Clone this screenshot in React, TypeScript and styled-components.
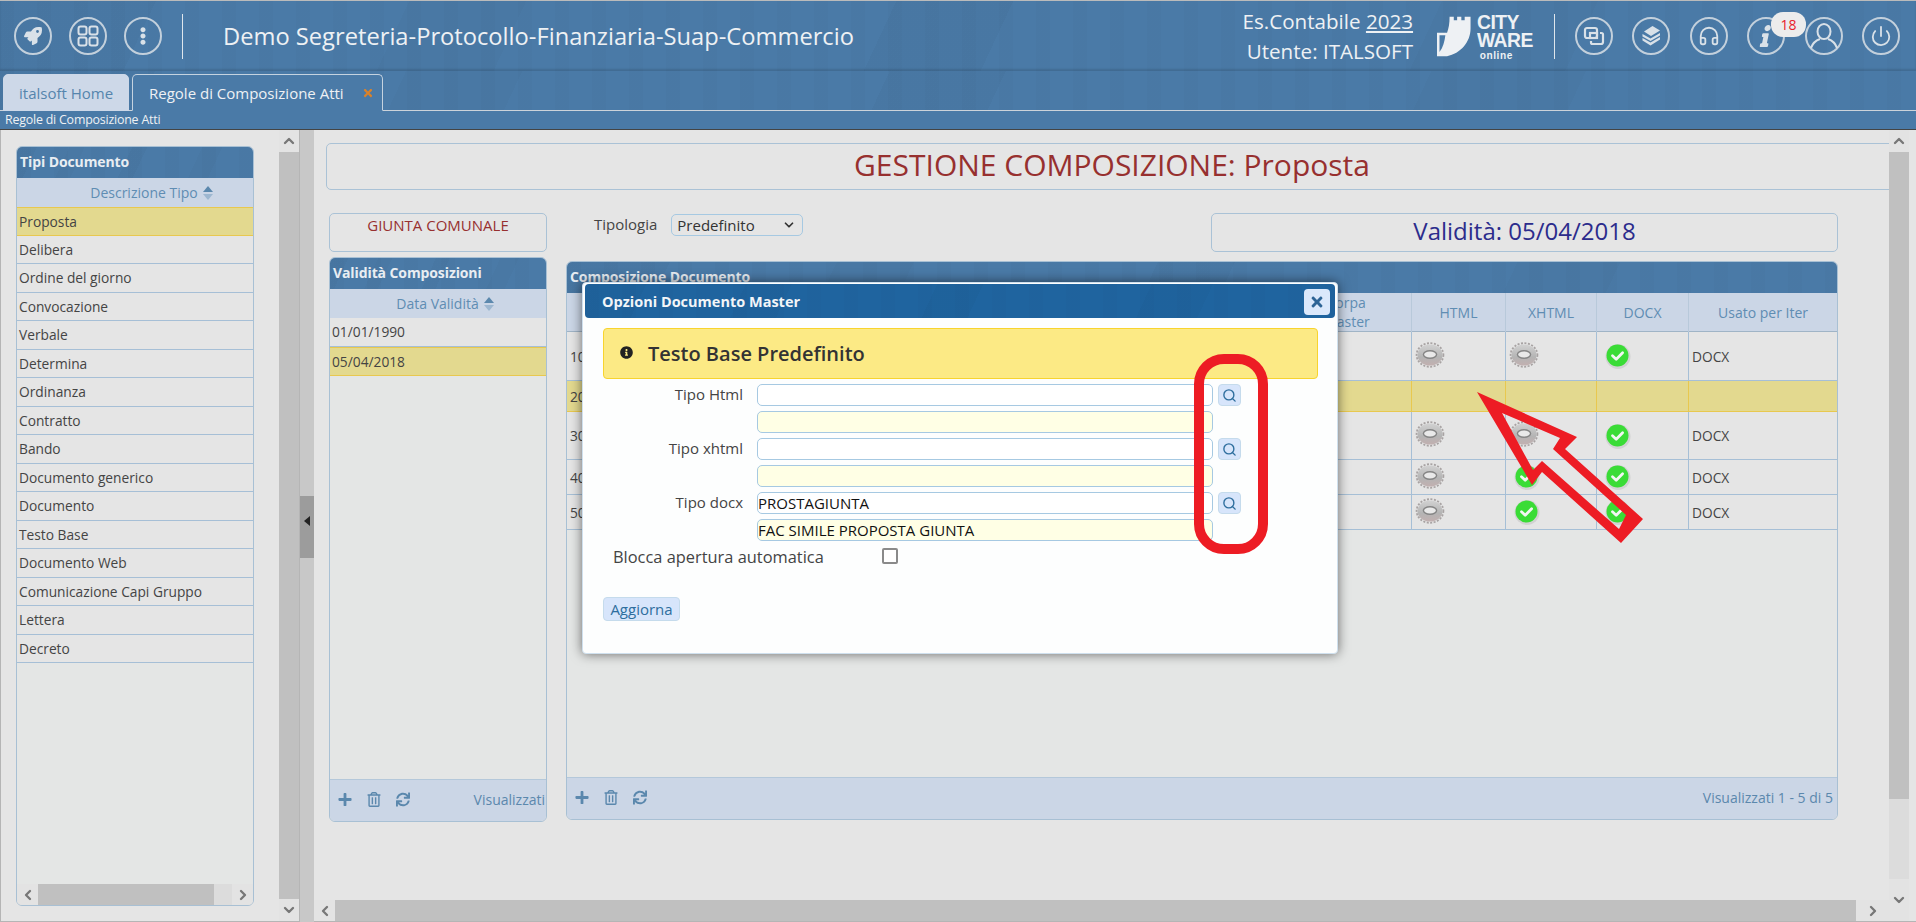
import React from 'react';
import styled, { createGlobalStyle, css } from 'styled-components';
import {
  FaRocket,
  FaEllipsisV,
  FaInfo,
  FaInfoCircle,
  FaPlus,
  FaRegTrashAlt,
  FaSync,
  FaTimes,
} from 'react-icons/fa';
import { LuHeadphones, LuPower, LuSearch, LuChevronUp, LuChevronDown, LuChevronLeft, LuChevronRight } from 'react-icons/lu';

const GlobalStyle = createGlobalStyle`
  html, body {
    margin: 0;
    padding: 0;
    height: 100%;
    overflow: hidden;
    background: #e5e5e5;
  }
  * { box-sizing: border-box; }
  body {
    font-family: "Open Sans", "Liberation Sans", sans-serif;
    font-size: 14px;
    color: #444;
  }
`;

const texture = css`
  background-image:
    linear-gradient(115deg, rgba(0, 0, 0, 0.025) 0 8%, transparent 8% 21%, rgba(0, 0, 0, 0.02) 21% 27%, transparent 27% 46%, rgba(0, 0, 0, 0.025) 46% 52%, transparent 52% 74%, rgba(0, 0, 0, 0.02) 74% 82%, transparent 82%),
    repeating-linear-gradient(90deg, rgba(0, 0, 0, 0.015) 0 14px, transparent 14px 37px);
`;

const Page = styled.div`
  position: relative;
  width: 1916px;
  height: 922px;
  display: flex;
  flex-direction: column;
  overflow: hidden;
  border-top: 1px solid #bbb;
`;

const Header = styled.header`
  height: 70px;
  flex-shrink: 0;
  display: flex;
  align-items: center;
  padding: 0 16px 0 14px;
  background-color: #4a7aa7;
  ${texture}
  box-shadow: inset 0 -2px 2px rgba(0, 0, 0, 0.12);
  color: #eef1f4;
`;

const CircleBtn = styled.div`
  width: 38px;
  height: 38px;
  flex-shrink: 0;
  border-radius: 50%;
  border: 2px solid #c3d0dc;
  display: flex;
  align-items: center;
  justify-content: center;
  color: #d9e1e8;
  font-size: 18px;
`;

const IconGroup = styled.div<{ $gap: number }>`
  display: flex;
  align-items: center;
  gap: ${(p) => p.$gap}px;
`;

const Divider = styled.div<{ $ml: number }>`
  width: 1px;
  height: 45px;
  background: #dfe6ec;
  margin-left: ${(p) => p.$ml}px;
`;

const AppTitle = styled.div`
  margin-left: 40px;
  font-size: 23.7px;
  white-space: nowrap;
  flex: 1;
`;

const UserInfo = styled.div`
  text-align: right;
  font-size: 20.6px;
  line-height: 30px;
  white-space: nowrap;
  u { text-underline-offset: 2px; }
`;

const Logo = styled.div`
  display: flex;
  align-items: center;
  margin-left: 24px;
  width: 101px;
  gap: 6px;
  color: #eef1f4;
`;

const LogoText = styled.div`
  font-family: "Liberation Sans", sans-serif;
  font-weight: 700;
  font-size: 21px;
  line-height: 18px;
  letter-spacing: -0.6px;
  margin-top: 3px;
  transform: scaleX(0.92);
  transform-origin: left center;
  span {
    display: block;
    font-size: 11px;
    line-height: 13px;
    letter-spacing: 0.6px;
    margin-left: 3px;
  }
`;

const RightIcons = styled(IconGroup)`
  margin-left: 20px;
`;

const Badge = styled.div`
  position: absolute;
  top: 11px;
  left: 1771px;
  width: 35px;
  height: 25px;
  border-radius: 12px;
  background: #ececec;
  color: #e8202a;
  font-size: 14px;
  display: flex;
  align-items: center;
  justify-content: center;
`;

const ItalicInfo = styled(FaInfo)`
  font-size: 22px;
  transform: skewX(-12deg);
`;

const TabStrip = styled.nav`
  height: 40px;
  flex-shrink: 0;
  display: flex;
  align-items: flex-end;
  gap: 3px;
  padding-left: 3px;
  background-color: #4a7aa7;
  ${texture}
  border-bottom: 1px solid #ccd3da;
`;

const Tab = styled.div<{ $active?: boolean }>`
  height: 37px;
  margin-bottom: -1px;
  display: flex;
  align-items: center;
  border-radius: 5px 5px 0 0;
  font-size: 15px;
  white-space: nowrap;
  border: 1px solid ${(p) => (p.$active ? '#c5d3e0' : '#cdd8e8')};
  border-bottom: ${(p) => (p.$active ? '1px solid #4a7aa7' : '1px solid #cdd8e8')};
  background: ${(p) => (p.$active ? '#4a7aa7' : '#cdd8e8')};
  color: ${(p) => (p.$active ? '#eef1f4' : '#5585ad')};
  padding: 0 ${(p) => (p.$active ? '8px 0 16px' : '15px 0 15px')};
  width: ${(p) => (p.$active ? '251px' : '126px')};
  justify-content: space-between;
  svg { color: #d9822b; font-size: 12px; }
`;

const SubBar = styled.div`
  height: 19px;
  flex-shrink: 0;
  background: #4a7aa7;
  border-bottom: 1px solid #444;
  color: #eef1f4;
  font-size: 12.4px;
  line-height: 18px;
  padding-left: 5px;
  letter-spacing: -0.2px;
`;

const Workspace = styled.div`
  flex: 1;
  min-height: 0;
  display: flex;
`;

const LeftPane = styled.aside`
  width: 300px;
  flex-shrink: 0;
  display: flex;
  border: 1px solid #b5b5b5;
  border-top: none;
`;

const LeftContent = styled.div`
  flex: 1;
  min-width: 0;
  padding: 16px 25px 14px 15px;
  display: flex;
`;

const VScroll = styled.div`
  width: 20px;
  flex-shrink: 0;
  display: flex;
  flex-direction: column;
  background: #dcdcdc;
`;

const HScroll = styled.div`
  height: 21px;
  flex-shrink: 0;
  display: flex;
  background: #dcdcdc;
`;

const ScrollBtn = styled.div<{ $horizontal?: boolean; $size?: number }>`
  ${(p) => (p.$horizontal ? `width: ${p.$size ?? 21}px;` : `height: ${p.$size ?? 22}px;`)}
  flex-shrink: 0;
  display: flex;
  align-items: center;
  justify-content: center;
  background: #e3e3e3;
  color: #777;
  font-size: 16px;
`;

const ScrollThumb = styled.div<{ $size?: number }>`
  background: #c0c0c0;
  ${(p) => (p.$size ? `flex: 0 0 ${p.$size}px;` : 'flex: 1;')}
`;

const ScrollSpace = styled.div`
  flex: 1;
`;

const Splitter = styled.div`
  width: 14px;
  flex-shrink: 0;
  background: #c8c8c8;
  display: flex;
  align-items: center;
`;

const SplitHandle = styled.div`
  width: 100%;
  height: 62px;
  margin-top: 2px;
  background: #9c9c9c;
  display: flex;
  align-items: center;
  justify-content: center;
  &::before {
    content: '';
    border-style: solid;
    border-width: 5px 6px 5px 0;
    border-color: transparent #222 transparent transparent;
    margin-bottom: 12px;
  }
`;

const MainPane = styled.main`
  flex: 1;
  min-width: 0;
  display: flex;
  border-radius: 6px 0 0 0;
  padding-right: 7px;
  border-bottom: 1px solid #b5b5b5;
`;

const MainColumn = styled.div`
  flex: 1;
  min-width: 0;
  display: flex;
  flex-direction: column;
`;

const Canvas = styled.div`
  flex: 1;
  min-height: 0;
  overflow: hidden;
  padding: 13px 0 0 12px;
`;

const TitleBox = styled.div`
  width: 1572px;
  height: 47px;
  border: 1px solid #aac2d6;
  border-radius: 5px;
  color: #97302f;
  font-size: 30px;
  text-align: center;
  line-height: 42px;
`;

const Columns = styled.div`
  display: flex;
  margin: 23px 0 0 3px;
  gap: 19px;
`;

const SideColumn = styled.div`
  width: 218px;
  flex-shrink: 0;
  display: flex;
  flex-direction: column;
  gap: 5px;
`;

const WideColumn = styled.div`
  width: 1272px;
  flex-shrink: 0;
  display: flex;
  flex-direction: column;
  gap: 9px;
`;

const OrganoBox = styled.div`
  height: 39px;
  border: 1px solid #aac2d6;
  border-radius: 5px;
  color: #97302f;
  font-size: 15px;
  line-height: 20px;
  text-align: center;
  padding-top: 1px;
`;

const FilterRow = styled.div`
  height: 39px;
  display: flex;
  align-items: flex-start;
  padding-left: 28px;
`;

const FieldLabel = styled.label`
  font-size: 15px;
  line-height: 22px;
  margin-right: 14px;
`;

const SelectBox = styled.div`
  width: 132px;
  height: 22px;
  margin-top: 1px;
  border: 1px solid #a6c9e2;
  border-radius: 5px;
  display: flex;
  align-items: center;
  justify-content: space-between;
  padding: 0 6px 0 5px;
  color: #333;
  font-size: 15px;
  svg { font-size: 14px; stroke-width: 3; }
`;

const ValidityBox = styled.div`
  width: 627px;
  height: 39px;
  margin-left: auto;
  border: 1px solid #aac2d6;
  border-radius: 5px;
  color: #2c2c8c;
  font-size: 24px;
  text-align: center;
  line-height: 34px;
`;

const GridPanel = styled.section<{ $height: number }>`
  height: ${(p) => p.$height}px;
  display: flex;
  flex-direction: column;
  border: 1px solid #a8c0d4;
  border-radius: 6px;
  overflow: hidden;
  background: #e5e5e5;
`;

const StretchPanel = styled(GridPanel)`
  flex: 1;
  min-width: 0;
`;

const GridCaption = styled.div`
  height: 31px;
  flex-shrink: 0;
  background-color: #4a7aa7;
  ${texture}
  color: #e8edf2;
  font-weight: 700;
  padding-left: 3px;
  line-height: 30px;
  white-space: nowrap;
  letter-spacing: -0.1px;
`;

const ColHeader = styled.div<{ $shift: number }>`
  height: 29px;
  flex-shrink: 0;
  display: flex;
  align-items: center;
  justify-content: center;
  gap: 5px;
  padding-left: ${(p) => p.$shift}px;
  background: #cbd6e6;
  color: #5f8db3;
`;

const Sort = styled.span`
  display: inline-flex;
  flex-direction: column;
  gap: 2px;
  &::before, &::after {
    content: '';
    border-left: 5px solid transparent;
    border-right: 5px solid transparent;
  }
  &::before { border-bottom: 6px solid #5b88ad; }
  &::after { border-top: 6px solid #9db7d0; }
`;

const GridBody = styled.div`
  flex: 1;
  min-height: 0;
  background: #e4e6e5;
`;

const ListRow = styled.div<{ $selected?: boolean; $height: number }>`
  height: ${(p) => p.$height}px;
  padding-left: 2px;
  display: flex;
  align-items: center;
  white-space: nowrap;
  font-size: 13.75px;
  background: ${(p) => (p.$selected ? '#e3d98f' : '#e5e5e5')};
  border-bottom: 1px solid ${(p) => (p.$selected ? '#e8c84f' : '#a6bfd6')};
  border-top: ${(p) => (p.$selected ? '1px solid #e8c84f' : 'none')};
`;

const GridFooter = styled.div`
  height: 42px;
  flex-shrink: 0;
  display: flex;
  align-items: center;
  gap: 15px;
  padding: 0 4px 2px 8px;
  background: #cbd6e6;
  border-top: 1px solid #b4c8da;
  color: #5b88ad;
  font-size: 14px;
`;

const FooterIcon = styled.span`
  width: 14px;
  display: inline-flex;
  justify-content: center;
  svg { font-size: 15px; }
`;

const PagerInfo = styled.span<{ $clipped?: boolean }>`
  margin-left: auto;
  margin-right: ${(p) => (p.$clipped ? '-3px' : '0')};
  white-space: nowrap;
`;

const docColumns = '701px 144px 94px 91px 92px 1fr';

const DocHeader = styled.div`
  height: 39px;
  flex-shrink: 0;
  display: grid;
  grid-template-columns: ${docColumns};
  background: #cbd6e6;
  color: #5f8db3;
  border-bottom: 1px solid #a0b4c6;
`;

const DocHeadCell = styled.div`
  display: flex;
  align-items: center;
  justify-content: center;
  text-align: center;
  line-height: 19px;
  padding-bottom: 1px;
  border-right: 1px solid #b8c9da;
  &:last-child { border-right: none; }
`;

const DocRow = styled.div<{ $height: number; $selected?: boolean }>`
  height: ${(p) => p.$height}px;
  display: grid;
  grid-template-columns: ${docColumns};
  background: ${(p) => (p.$selected ? '#e3d98f' : '#e5e5e5')};
  border-bottom: 1px solid ${(p) => (p.$selected ? '#e8c84f' : '#a6bfd6')};
`;

const DocCell = styled.div<{ $selected?: boolean }>`
  display: flex;
  align-items: center;
  padding-left: 3px;
  font-size: 13.75px;
  border-right: 1px solid ${(p) => (p.$selected ? '#e8c84f' : '#a6bfd6')};
  &:first-child { border-right: none; }
  &:last-child { border-right: none; }
`;

const Dialog = styled.div`
  position: absolute;
  left: 582px;
  top: 281px;
  width: 756px;
  height: 372px;
  padding: 1px 2px;
  background: #fdfefe;
  border-radius: 4px;
  border: 1px solid #cfe0ee;
  box-shadow: 0 0 12px rgba(0, 0, 0, 0.55);
  z-index: 5;
`;

const DialogBar = styled.div`
  height: 34px;
  display: flex;
  align-items: center;
  justify-content: space-between;
  padding: 1px 5px 0 17px;
  border-radius: 4px;
  background-color: #1f649f;
  ${texture}
  color: #f2f5f8;
  font-weight: 700;
  font-size: 14.5px;
`;

const CloseBtn = styled.div`
  width: 26px;
  height: 26px;
  border-radius: 4px;
  background: #dbe8fb;
  color: #2e6496;
  display: flex;
  align-items: center;
  justify-content: center;
  font-size: 16px;
`;

const DialogBody = styled.div`
  padding: 10px 17px 0 18px;
`;

const Notice = styled.div`
  height: 51px;
  display: flex;
  align-items: center;
  gap: 15px;
  padding-left: 16px;
  margin-bottom: 5px;
  background: #fcea85;
  border: 1px solid #f8d42e;
  border-radius: 4px;
  color: #333;
  font-size: 20px;
  font-weight: 600;
  svg { font-size: 13px; color: #222; margin-bottom: 3px; }
`;

const FormRow = styled.div`
  display: grid;
  grid-template-columns: 140px 470px 23px;
  height: 22px;
  margin-bottom: 5px;
`;

const FormLabel = styled.label`
  text-align: right;
  font-size: 15px;
  line-height: 20px;
`;

const InputSlot = styled.div`
  grid-column: 2;
  margin-left: 14px;
  width: 456px;
`;

const TextInput = styled.input<{ $readOnlyLook?: boolean }>`
  display: block;
  width: 100%;
  height: 22px;
  padding: 0;
  font: inherit;
  font-size: 15px;
  color: #111;
  border: 1px solid #a6c9e2;
  border-radius: 5px;
  background: ${(p) => (p.$readOnlyLook ? '#ffffe5' : '#ffffff')};
  outline: none;
`;

const SearchBtn = styled.div`
  grid-column: 3;
  margin-left: 5px;
  width: 23px;
  height: 22px;
  display: flex;
  align-items: center;
  justify-content: center;
  border: 1px solid #c5dbec;
  border-radius: 4px;
  background: #d7e5fb;
  color: #2e6e9e;
  font-size: 15px;
  svg { stroke-width: 2.2; }
`;

const CheckRow = styled.div`
  display: flex;
  align-items: center;
  height: 22px;
  margin-top: -1px;
  padding-left: 10px;
`;

const CheckLabel = styled.span`
  width: 269px;
  font-size: 16.4px;
  white-space: nowrap;
`;

const CheckBox = styled.span`
  width: 16px;
  height: 16px;
  border: 2px solid #8a8a8a;
  border-radius: 2px;
  background: #fff;
`;

const UpdateBtn = styled.button`
  display: block;
  margin-top: 30px;
  width: 77px;
  height: 24px;
  padding: 0;
  font: inherit;
  font-size: 15px;
  line-height: 20px;
  color: #2e6e9e;
  background: #d7e5fb;
  border: 1px solid #c5dbec;
  border-radius: 4px;
`;

const RedRing = styled.div`
  position: absolute;
  left: 1194px;
  top: 353px;
  width: 74px;
  height: 200px;
  border: 10px solid #ed1c24;
  border-radius: 30px;
  z-index: 6;
`;

const RedArrow = styled.svg`
  position: absolute;
  left: 1470px;
  top: 384px;
  z-index: 6;
`;

const GearIcon: React.FC = () => (
  <svg width="30" height="28" viewBox="0 0 30 28" style={{ marginTop: -3 }}>
    <defs>
      <linearGradient id="gearFill" x1="0" y1="0" x2="0" y2="1">
        <stop offset="0" stopColor="#d2d2d2" />
        <stop offset="0.6" stopColor="#b4b4b4" />
        <stop offset="1" stopColor="#c2b0b0" />
      </linearGradient>
    </defs>
    <ellipse cx="15" cy="14" rx="13.4" ry="11.8" fill="none" stroke="#a8a3a3" strokeWidth="1.8" strokeDasharray="2 1.5" />
    <ellipse cx="15" cy="14" rx="12.6" ry="10.6" fill="url(#gearFill)" />
    <ellipse cx="15" cy="13.5" rx="6.6" ry="3.8" fill="#e9e9e9" stroke="#858585" strokeWidth="1.4" />
  </svg>
);

const CheckIcon: React.FC = () => (
  <svg width="26" height="26" viewBox="0 0 26 26" style={{ marginLeft: 5 }}>
    <circle cx="13" cy="13.5" r="12.5" fill="#d2d2d2" />
    <circle cx="12.5" cy="12.5" r="11" fill="#3adc36" />
    <path d="M7.5 12.8 L11.2 16.2 L17.6 9.8" fill="none" stroke="#f2f6f2" strokeWidth="2.8" strokeLinecap="round" strokeLinejoin="round" />
  </svg>
);

const GridGlyph: React.FC = () => (
  <svg width="24" height="24" viewBox="0 0 24 24" fill="none" stroke="currentColor" strokeWidth="2">
    <rect x="2.5" y="2.5" width="8" height="8" rx="2" />
    <rect x="13.5" y="2.5" width="8" height="8" rx="2" />
    <rect x="2.5" y="13.5" width="8" height="8" rx="2" />
    <rect x="13.5" y="13.5" width="8" height="8" rx="2" />
  </svg>
);

const WindowsGlyph: React.FC = () => (
  <svg width="22" height="20" viewBox="0 0 22 20" fill="none" stroke="currentColor" strokeWidth="2.2">
    <rect x="2" y="2" width="12" height="10" rx="2" />
    <path d="M17 7h1.5a1.5 1.5 0 0 1 1.5 1.5V16a2 2 0 0 1-2 2H9.5A1.5 1.5 0 0 1 8 16.5V15" />
    <rect x="7" y="7" width="7" height="5" />
  </svg>
);

const BooksGlyph: React.FC = () => (
  <svg width="24" height="24" viewBox="0 0 24 24" fill="currentColor">
    <path d="M5 7.5 L13.5 2 L21 6.5 L12 12 Z" />
    <path d="M3.5 10 L11.5 14.5 L21 9 V11.5 L11.5 17 L3.5 12.5 Z" />
    <path d="M3.5 14 L11.5 18.5 L21 13 V15.5 L11.5 21.5 L3.5 16.5 Z" />
  </svg>
);

const UserGlyph: React.FC = () => (
  <svg width="34" height="34" viewBox="0 0 34 34" fill="none" stroke="currentColor" strokeWidth="2">
    <ellipse cx="17" cy="12.5" rx="6.5" ry="7.5" />
    <path d="M4 29c2-6 6-8 9-9M30 29c-2-6-6-8-9-9" />
  </svg>
);

const CityLogo: React.FC = () => (
  <svg width="41" height="47" viewBox="0 0 41 47" fill="currentColor">
    <path d="M15 0h5v4h4V0h5v4h4V0h7v14c0 16-12 30-28 33H0V19h12c2-5 3-11 3-19Z" />
    <path d="M3 22h7c-1 8-3 15-7 20Z" fill="#4a7aa7" />
  </svg>
);

const tipiDocumento = [
  'Proposta',
  'Delibera',
  'Ordine del giorno',
  'Convocazione',
  'Verbale',
  'Determina',
  'Ordinanza',
  'Contratto',
  'Bando',
  'Documento generico',
  'Documento',
  'Testo Base',
  'Documento Web',
  'Comunicazione Capi Gruppo',
  'Lettera',
  'Decreto',
];

type DocLine = { seq: string; height: number; html?: string; xhtml?: string; docx?: string; iter?: string; selected?: boolean };

const docLines: DocLine[] = [
  { seq: '10', height: 49, html: 'gear', xhtml: 'gear', docx: 'check', iter: 'DOCX' },
  { seq: '20', height: 31, selected: true },
  { seq: '30', height: 48, html: 'gear', xhtml: 'gear', docx: 'check', iter: 'DOCX' },
  { seq: '40', height: 35, html: 'gear', xhtml: 'check', docx: 'check', iter: 'DOCX' },
  { seq: '50', height: 35, html: 'gear', xhtml: 'check', docx: 'check', iter: 'DOCX' },
];

const StateIcon: React.FC<{ kind?: string }> = ({ kind }) => {
  if (kind === 'gear') return <GearIcon />;
  if (kind === 'check') return <CheckIcon />;
  return null;
};

const FooterTools: React.FC = () => (
  <>
    <FooterIcon><FaPlus /></FooterIcon>
    <FooterIcon><FaRegTrashAlt /></FooterIcon>
    <FooterIcon><FaSync /></FooterIcon>
  </>
);

const DocField: React.FC<{ label: string; code?: string; description?: string }> = ({ label, code = '', description = '' }) => (
  <>
    <FormRow>
      <FormLabel>{label}</FormLabel>
      <InputSlot><TextInput readOnly value={code} /></InputSlot>
      <SearchBtn><LuSearch /></SearchBtn>
    </FormRow>
    <FormRow>
      <InputSlot><TextInput $readOnlyLook readOnly value={description} /></InputSlot>
    </FormRow>
  </>
);

const App: React.FC = () => (
  <>
    <GlobalStyle />
    <Page>
      <Header>
        <IconGroup $gap={17}>
          <CircleBtn><FaRocket /></CircleBtn>
          <CircleBtn><GridGlyph /></CircleBtn>
          <CircleBtn><FaEllipsisV /></CircleBtn>
        </IconGroup>
        <Divider $ml={20} />
        <AppTitle>Demo Segreteria-Protocollo-Finanziaria-Suap-Commercio</AppTitle>
        <UserInfo>
          <div>Es.Contabile <u>2023</u></div>
          <div>Utente: ITALSOFT</div>
        </UserInfo>
        <Logo>
          <CityLogo />
          <LogoText>
            CITY
            <br />
            WARE
            <span>online</span>
          </LogoText>
        </Logo>
        <Divider $ml={16} />
        <RightIcons $gap={19.4}>
          <CircleBtn><WindowsGlyph /></CircleBtn>
          <CircleBtn><BooksGlyph /></CircleBtn>
          <CircleBtn><LuHeadphones size={22} /></CircleBtn>
          <CircleBtn><ItalicInfo /></CircleBtn>
          <CircleBtn><UserGlyph /></CircleBtn>
          <CircleBtn><LuPower size={22} /></CircleBtn>
        </RightIcons>
      </Header>
      <Badge>18</Badge>
      <TabStrip>
        <Tab>italsoft Home</Tab>
        <Tab $active>
          Regole di Composizione Atti
          <FaTimes />
        </Tab>
      </TabStrip>
      <SubBar>Regole di Composizione Atti</SubBar>
      <Workspace>
        <LeftPane>
          <LeftContent>
            <StretchPanel $height={760}>
              <GridCaption>Tipi Documento</GridCaption>
              <ColHeader $shift={33}>
                Descrizione Tipo
                <Sort />
              </ColHeader>
              <GridBody>
                {tipiDocumento.map((name, i) => (
                  <ListRow key={name} $height={28.5} $selected={i === 0}>{name}</ListRow>
                ))}
              </GridBody>
              <HScroll>
                <ScrollBtn $horizontal><LuChevronLeft strokeWidth={3.5} /></ScrollBtn>
                <ScrollThumb $size={176} />
                <ScrollSpace />
                <ScrollBtn $horizontal><LuChevronRight strokeWidth={3.5} /></ScrollBtn>
              </HScroll>
            </StretchPanel>
          </LeftContent>
          <VScroll>
            <ScrollBtn><LuChevronUp strokeWidth={3.5} /></ScrollBtn>
            <ScrollThumb />
            <ScrollBtn><LuChevronDown strokeWidth={3.5} /></ScrollBtn>
          </VScroll>
        </LeftPane>
        <Splitter>
          <SplitHandle />
        </Splitter>
        <MainPane>
          <MainColumn>
            <Canvas>
              <TitleBox>GESTIONE COMPOSIZIONE: Proposta</TitleBox>
              <Columns>
                <SideColumn>
                  <OrganoBox>GIUNTA COMUNALE</OrganoBox>
                  <GridPanel $height={565}>
                    <GridCaption>Validità Composizioni</GridCaption>
                    <ColHeader $shift={14}>
                      Data Validità
                      <Sort />
                    </ColHeader>
                    <GridBody>
                      <ListRow $height={28.5}>01/01/1990</ListRow>
                      <ListRow $height={29} $selected>05/04/2018</ListRow>
                    </GridBody>
                    <GridFooter>
                      <FooterTools />
                      <PagerInfo $clipped>Visualizzati</PagerInfo>
                    </GridFooter>
                  </GridPanel>
                </SideColumn>
                <WideColumn>
                  <FilterRow>
                    <FieldLabel>Tipologia</FieldLabel>
                    <SelectBox>
                      Predefinito
                      <LuChevronDown />
                    </SelectBox>
                    <ValidityBox>Validità: 05/04/2018</ValidityBox>
                  </FilterRow>
                  <GridPanel $height={559}>
                    <GridCaption>Composizione Documento</GridCaption>
                    <DocHeader>
                      <DocHeadCell />
                      <DocHeadCell>Accorpa<br />al Master</DocHeadCell>
                      <DocHeadCell>HTML</DocHeadCell>
                      <DocHeadCell>XHTML</DocHeadCell>
                      <DocHeadCell>DOCX</DocHeadCell>
                      <DocHeadCell>Usato per Iter</DocHeadCell>
                    </DocHeader>
                    <GridBody>
                      {docLines.map((line) => (
                        <DocRow key={line.seq} $height={line.height} $selected={line.selected}>
                          <DocCell $selected={line.selected}>{line.seq}</DocCell>
                          <DocCell $selected={line.selected} />
                          <DocCell $selected={line.selected}><StateIcon kind={line.html} /></DocCell>
                          <DocCell $selected={line.selected}><StateIcon kind={line.xhtml} /></DocCell>
                          <DocCell $selected={line.selected}><StateIcon kind={line.docx} /></DocCell>
                          <DocCell $selected={line.selected}>{line.iter}</DocCell>
                        </DocRow>
                      ))}
                    </GridBody>
                    <GridFooter>
                      <FooterTools />
                      <PagerInfo>Visualizzati 1 - 5 di 5</PagerInfo>
                    </GridFooter>
                  </GridPanel>
                </WideColumn>
              </Columns>
            </Canvas>
            <HScroll>
              <ScrollBtn $horizontal><LuChevronLeft strokeWidth={3.5} /></ScrollBtn>
              <ScrollThumb />
              <ScrollBtn $horizontal $size={33}><LuChevronRight strokeWidth={3.5} /></ScrollBtn>
            </HScroll>
          </MainColumn>
          <VScroll>
            <ScrollBtn><LuChevronUp strokeWidth={3.5} /></ScrollBtn>
            <ScrollThumb $size={647} />
            <ScrollSpace />
            <ScrollBtn $size={42}><LuChevronDown strokeWidth={3.5} /></ScrollBtn>
          </VScroll>
        </MainPane>
      </Workspace>

      <Dialog>
        <DialogBar>
          Opzioni Documento Master
          <CloseBtn><FaTimes /></CloseBtn>
        </DialogBar>
        <DialogBody>
          <Notice>
            <FaInfoCircle />
            Testo Base Predefinito
          </Notice>
          <DocField label="Tipo Html" />
          <DocField label="Tipo xhtml" />
          <DocField label="Tipo docx" code="PROSTAGIUNTA" description="FAC SIMILE PROPOSTA GIUNTA" />
          <CheckRow>
            <CheckLabel>Blocca apertura automatica</CheckLabel>
            <CheckBox />
          </CheckRow>
          <UpdateBtn>Aggiorna</UpdateBtn>
        </DialogBody>
      </Dialog>

      <RedRing />
      <RedArrow width="180" height="165" viewBox="1470 385 180 165">
        <path
          fillRule="evenodd"
          fill="#ed1c24"
          d="M1477 392 L1577 437 L1565 449 L1643 519 L1621 543 L1542 472 L1532 485 Z M1502 413 L1533 470 L1542 461 L1619 529 L1626 515 L1553 449 L1560 438 Z"
        />
      </RedArrow>
    </Page>
  </>
);

export default App;
